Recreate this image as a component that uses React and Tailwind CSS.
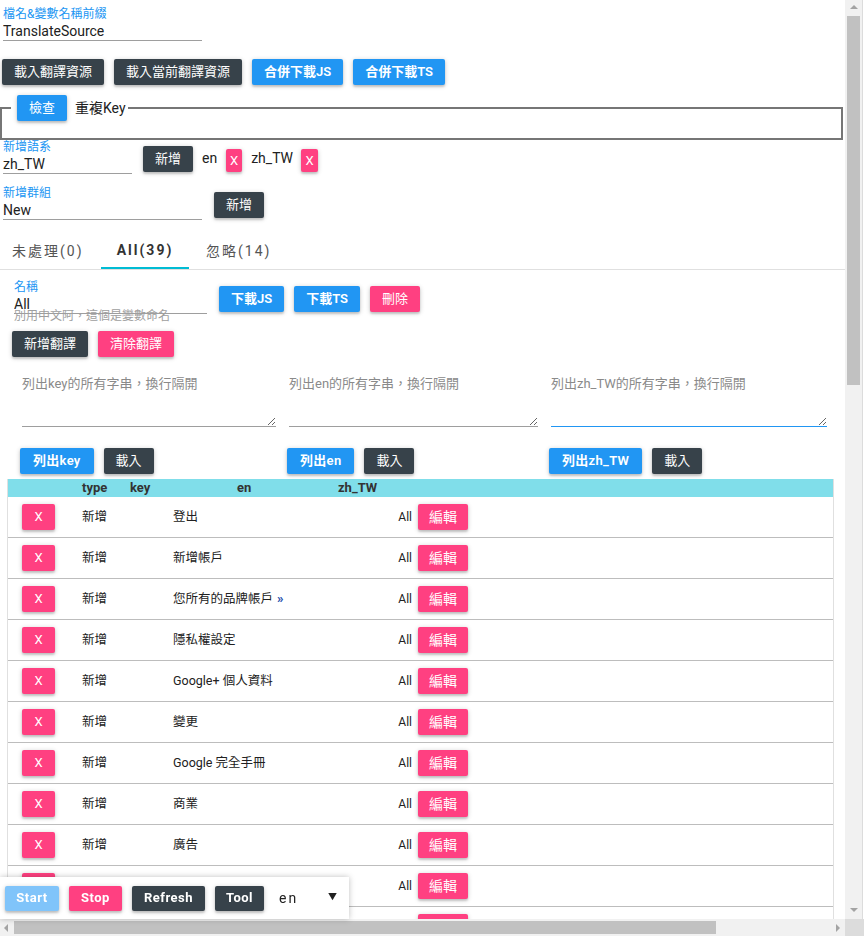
import React from 'react';

const btnBase =
  'h-[26px] px-[12px] rounded-[2px] text-white text-[13px] shadow-[0_2px_2px_0_rgba(0,0,0,0.14),0_1px_5px_0_rgba(0,0,0,0.2)] flex items-center justify-center shrink-0 whitespace-nowrap';

const colors = {
  dark: 'bg-[#37424a]',
  blue: 'bg-[#2196f3]',
  pink: 'bg-[#ff4081]',
  light: 'bg-[#80c4fa]',
};

const Btn = ({ color = 'dark', className = '', children }) => (
  <button type="button" className={`${btnBase} ${colors[color]} ${className}`}>
    {children}
  </button>
);

const Field = ({ label, value, width, className = '' }) => (
  <div className={className}>
    <label className="block text-[12px] leading-[16px] text-[#2196f3]">{label}</label>
    <input
      readOnly
      value={value}
      className={`block ${width} h-[19px] border-b border-[#9e9e9e] text-[14px] leading-[16px] text-[#212121] outline-none bg-transparent`}
    />
  </div>
);

const rows = [
  { key: '登出' },
  { key: '新增帳戶' },
  { key: '您所有的品牌帳戶', link: true },
  { key: '隱私權設定' },
  { key: 'Google+ 個人資料' },
  { key: '變更' },
  { key: 'Google 完全手冊' },
  { key: '商業' },
  { key: '廣告' },
  { key: '說明' },
  { key: '搜尋' },
  { key: '設定' },
];

const ListColumn = ({ placeholder, listLabel, width, textWidth, className = '', focused }) => (
  <div className={`${width} shrink-0 ${className}`}>
    <textarea
      placeholder={placeholder}
      autoFocus={focused}
      className={`block ml-[2px] ${textWidth} h-[57px] pt-[6px] px-0 text-[13px] leading-[16px] border-b outline-none placeholder:text-[#8a8a8a] ${
        focused ? 'border-[#2196f3]' : 'border-[#9e9e9e]'
      }`}
    />
    <div className="mt-[21px] flex gap-[10px]">
      <Btn color="blue" className="font-semibold !px-[13px] tracking-[0.3px]">{listLabel}</Btn>
      <Btn>載入</Btn>
    </div>
  </div>
);

const Triangle = ({ dir }) => {
  const pts = {
    up: '1,6 5,2 9,6',
    down: '1,2 9,2 5,6',
    left: '6,1 6,9 2,5',
    right: '3,1 3,9 7,5',
  };
  return (
    <svg width="10" height="10" viewBox="0 0 10 10">
      <polygon points={pts[dir]} fill="#a3a3a3" />
    </svg>
  );
};

export default function App() {
  return (
    <div className="w-[864px] h-[936px] relative flex flex-col overflow-hidden bg-white text-[#212121] font-[Roboto,'Noto_Sans_CJK_TC',sans-serif]">
      <div className="flex flex-1 min-h-0">
        <main className="w-[845px] shrink-0 overflow-hidden">
          <Field
            className="pt-[6px] pl-[3px]"
            label="檔名&變數名稱前綴"
            value="TranslateSource"
            width="w-[199px]"
          />

          <div className="mt-[18px] pl-[2px] flex gap-[10px]">
            <Btn>載入翻譯資源</Btn>
            <Btn>載入當前翻譯資源</Btn>
            <Btn color="blue" className="font-semibold">合併下載JS</Btn>
            <Btn color="blue" className="font-semibold">合併下載TS</Btn>
          </div>

          <fieldset className="mt-[10px] w-[843px] border-2 border-[#767676] px-[9px]">
            <legend className="flex items-center pl-[6px] pr-[2px]">
              <Btn color="blue">檢查</Btn>
              <span className="ml-[8px] text-[14px]">重複Key</span>
            </legend>
            <div className="h-[17px]" />
          </fieldset>

          <div className="-mt-[1px] flex items-start">
            <Field className="pl-[3px]" label="新增語系" value="zh_TW" width="w-[129px]" />
            <Btn className="ml-[11px] mt-[7px]">新增</Btn>
            <span className="ml-[9px] mt-[11px] text-[14px] leading-[16px]">en</span>
            <Btn color="pink" className="ml-[9px] mt-[10px] !px-0 w-[16px] !h-[23px]">X</Btn>
            <span className="ml-[9px] mt-[11px] text-[14px] leading-[16px]">zh_TW</span>
            <Btn color="pink" className="ml-[8px] mt-[10px] !px-0 w-[17px] !h-[23px]">X</Btn>
          </div>

          <div className="mt-[11px] flex items-start">
            <Field className="pl-[3px]" label="新增群組" value="New" width="w-[199px]" />
            <Btn className="ml-[12px] mt-[7px]">新增</Btn>
          </div>

          <div className="mt-[13px] h-[37px] flex border-b border-[#e0e0e0] text-[14px] tracking-[2px] text-[#555]">
            <div className="w-[101px] pl-[12px] flex items-center">未處理(0)</div>
            <div className="w-[88px] flex items-center justify-center font-bold text-[#333] border-b-2 border-[#00bcd4]">
              All(39)
            </div>
            <div className="ml-[17px] flex items-center">忽略(14)</div>
          </div>

          <div className="mt-[9px] pl-[14px] flex items-start">
            <Field label="名稱" value="All" width="w-[193px]" />
            <div className="ml-[12px] mt-[7px] flex gap-[10px]">
              <Btn color="blue" className="font-semibold">下載JS</Btn>
              <Btn color="blue" className="font-semibold">下載TS</Btn>
              <Btn color="pink">刪除</Btn>
            </div>
          </div>
          <div className="-mt-[5px] pl-[14px] text-[12px] leading-[14px] text-[#9e9e9e]">
            別用中文阿，這個是變數命名
          </div>

          <div className="mt-[8px] pl-[12px] flex gap-[10px]">
            <Btn>新增翻譯</Btn>
            <Btn color="pink">清除翻譯</Btn>
          </div>

          <div className="mt-[13px] pl-[20px] flex">
            <ListColumn
              width="w-[256px]"
              textWidth="w-[254px]"
              placeholder="列出key的所有字串，換行隔開"
              listLabel="列出key"
            />
            <ListColumn
              className="ml-[11px]"
              width="w-[251px]"
              textWidth="w-[249px]"
              placeholder="列出en的所有字串，換行隔開"
              listLabel="列出en"
            />
            <ListColumn
              className="ml-[11px]"
              width="w-[278px]"
              textWidth="w-[276px]"
              placeholder="列出zh_TW的所有字串，換行隔開"
              listLabel="列出zh_TW"
              focused
            />
          </div>

          <div className="mt-[5px] ml-[7px] w-[827px] border-x border-[#e0e0e0]">
            <div className="h-[18px] bg-[#80deea] flex items-center text-[13px] font-bold text-[#333]">
              <span className="w-[74px]" />
              <span className="w-[48px]">type</span>
              <span className="w-[107px]">key</span>
              <span className="w-[101px]">en</span>
              <span>zh_TW</span>
            </div>
            {rows.map((r) => (
              <div key={r.key} className="h-[41px] flex items-center border-b border-[#bdbdbd] text-[12.5px]">
                <Btn color="pink" className="ml-[14px] w-[33px] !px-0">X</Btn>
                <span className="ml-[27px] w-[91px]">新增</span>
                <span className="w-[215px]">
                  {r.key}
                  {r.link && <span className="ml-[4px] text-[13px] font-bold text-[#1a4dab]">»</span>}
                </span>
                <span className="w-[24px] text-right text-[12px]">All</span>
                <Btn color="pink" className="ml-[6px] w-[50px] !px-0 text-[14px]">編輯</Btn>
              </div>
            ))}
          </div>
        </main>

        <div className="w-[17px] shrink-0 bg-[#f1f1f1] flex flex-col">
          <div className="h-[16px] flex items-center justify-center">
            <Triangle dir="up" />
          </div>
          <div className="mx-[2px] h-[369px] bg-[#c1c1c1]" />
          <div className="flex-1" />
          <div className="h-[16px] flex items-center justify-center">
            <Triangle dir="down" />
          </div>
        </div>
        <div className="w-[2px] shrink-0 border-l border-[#dcdcdc] bg-white" />
      </div>

      <div className="h-[17px] shrink-0 flex">
        <div className="w-[845px] bg-[#f1f1f1] flex items-center">
          <div className="w-[14px] flex justify-center">
            <Triangle dir="left" />
          </div>
          <div className="w-[702px] h-[13px] bg-[#c1c1c1]" />
          <div className="flex-1" />
          <div className="w-[14px] flex justify-center">
            <Triangle dir="right" />
          </div>
        </div>
        <div className="flex-1 bg-[#dcdcdc]" />
      </div>

      <div className="absolute left-0 bottom-[17px] w-[349px] h-[42px] bg-white shadow-[0_0_6px_rgba(0,0,0,0.25)] flex items-center pl-[5px] gap-[10px] tracking-[0.5px]">
        <Btn color="light" className="w-[54px] !px-0 !h-[25px] font-bold">Start</Btn>
        <Btn color="pink" className="w-[53px] !px-0 !h-[25px] font-bold">Stop</Btn>
        <Btn className="w-[73px] !px-0 !h-[25px] font-bold">Refresh</Btn>
        <Btn className="w-[49px] !px-0 !h-[25px] font-bold">Tool</Btn>
        <div className="ml-[5px] w-[64px] flex items-center justify-between text-[14px] tracking-[2px]">
          <span>en</span>
          <span className="text-[9px] mr-[4px]">▼</span>
        </div>
      </div>
    </div>
  );
}
